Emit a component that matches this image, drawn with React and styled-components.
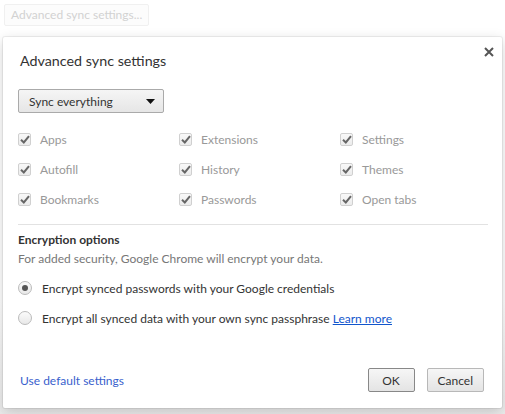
import React from 'react'
import styled, { createGlobalStyle } from 'styled-components'

const GlobalStyle = createGlobalStyle`
  html, body {
    margin: 0;
    padding: 0;
    background: #fff;
  }
  body {
    font-family: Lato, "Noto Sans", sans-serif;
    color: #333;
  }
`;

const Page = styled.div`
  width: 505px;
  height: 414px;
  overflow: hidden;
  display: flex;
  flex-direction: column;
  padding: 4px 3px 0 3px;
  box-sizing: border-box;
  background: linear-gradient(#fff 0, #fff 300px, #ececec 414px);
`;

const FadedButton = styled.div`
  align-self: flex-start;
  margin-left: 1px;
  height: 22px;
  padding: 0 6px;
  box-sizing: border-box;
  border: 1px solid #f0f0f0;
  border-radius: 2px;
  color: #d2d2d2;
  font-size: 12px;
  line-height: 20px;
  background: #fcfcfc;
`;

const Dialog = styled.div`
  margin-top: 11px;
  width: 499px;
  height: 371px;
  box-sizing: border-box;
  background: #fff;
  border-radius: 2px;
  box-shadow: 0 0 0 1px rgba(0, 0, 0, 0.06), 0 4px 14px rgba(0, 0, 0, 0.18);
  position: relative;
  display: flex;
  flex-direction: column;
  padding: 14px 15px 16px 15px;
  font-size: 12px;
`;

const Close = styled.button`
  position: absolute;
  top: 8px;
  right: 6px;
  width: 14px;
  height: 14px;
  padding: 0;
  border: none;
  background: none;
  display: flex;
  align-items: center;
  justify-content: center;
`;

const Title = styled.h1`
  margin: 0 0 0 2px;
  font-size: 14.3px;
  font-weight: 400;
  color: #333;
  line-height: 20px;
`;

const Select = styled.div`
  margin-top: 18px;
  width: 146px;
  height: 24px;
  box-sizing: border-box;
  border: 1px solid #aaa;
  border-radius: 2px;
  background: linear-gradient(#f5f5f5, #e6e6e6);
  display: flex;
  align-items: center;
  justify-content: space-between;
  padding: 0 8px 0 10px;
  color: #333;
`;

const Grid = styled.div`
  margin-top: 17px;
  display: grid;
  grid-template-columns: 161px 161px 1fr;
  row-gap: 12px;
`;

const CheckItem = styled.div`
  display: flex;
  align-items: center;
  height: 18px;
  gap: 9px;
  color: #999;
`;

const Box = styled.span`
  width: 13px;
  height: 13px;
  box-sizing: border-box;
  border: 1px solid #d0d0d0;
  border-radius: 2px;
  background: linear-gradient(#f8f8f8, #ececec);
  display: flex;
  align-items: center;
  justify-content: center;
`;

const Divider = styled.hr`
  margin: 16px 0 0 0;
  border: none;
  border-top: 1px solid #e2e2e2;
  width: 470px;
`;

const SectionTitle = styled.h2`
  margin: 6px 0 0 0;
  font-size: 12px;
  font-weight: 700;
  color: #333;
  line-height: 18px;
`;

const Note = styled.p`
  margin: 1px 0 0 0;
  color: #777;
  line-height: 18px;
`;

const RadioRow = styled.label`
  display: flex;
  align-items: center;
  gap: 10px;
  margin-top: ${p => p.$first ? '11px' : '12px'};
  height: 18px;
  color: #333;
`;

const Radio = styled.span`
  width: 14px;
  height: 14px;
  box-sizing: border-box;
  border-radius: 50%;
  border: 1px solid #bbb;
  background: linear-gradient(#fbfbfb, #e8e8e8);
  display: flex;
  align-items: center;
  justify-content: center;
  &::after {
    content: '';
    display: ${p => p.$checked ? 'block' : 'none'};
    width: 6px;
    height: 6px;
    border-radius: 50%;
    background: #555;
  }
`;

const Link = styled.a`
  color: #15c;
  text-decoration: underline;
  cursor: pointer;
`;

const Footer = styled.div`
  margin-top: auto;
  display: flex;
  align-items: center;
  justify-content: space-between;
`;

const DefaultLink = styled.a`
  margin-left: 2px;
  color: #3a5fcd;
  cursor: pointer;
`;

const Buttons = styled.div`
  display: flex;
  gap: 12px;
  margin-right: 3px;
`;

const Button = styled.button`
  height: 24px;
  min-width: ${p => p.$w}px;
  box-sizing: border-box;
  border: 1px solid ${p => p.$focus ? '#888' : '#b8b8b8'};
  border-radius: 2px;
  background: linear-gradient(#f6f6f6, #e4e4e4);
  font-family: inherit;
  font-size: 12px;
  color: #333;
  padding: 0 10px;
`;

const Check = () => (
  <svg width="10" height="9" viewBox="0 0 10 9">
    <path d="M1 4.8 L3.8 7.5 L9 1.2" fill="none" stroke="#666" strokeWidth="2" />
  </svg>
);

const items = ['Apps', 'Extensions', 'Settings', 'Autofill', 'History', 'Themes', 'Bookmarks', 'Passwords', 'Open tabs'];

export default function App() {
  return (
    <Page>
      <GlobalStyle />
      <FadedButton>Advanced sync settings...</FadedButton>
      <Dialog>
        <Close aria-label="Close">
          <svg width="10" height="10" viewBox="0 0 10 10">
            <path d="M1 1 L9 9 M9 1 L1 9" stroke="#555" strokeWidth="2" />
          </svg>
        </Close>
        <Title>Advanced sync settings</Title>
        <Select>
          <span>Sync everything</span>
          <svg width="9" height="5" viewBox="0 0 9 5">
            <path d="M0 0 H9 L4.5 5 Z" fill="#111" />
          </svg>
        </Select>
        <Grid>
          {items.map(name => (
            <CheckItem key={name}>
              <Box><Check /></Box>
              {name}
            </CheckItem>
          ))}
        </Grid>
        <Divider />
        <SectionTitle>Encryption options</SectionTitle>
        <Note>For added security, Google Chrome will encrypt your data.</Note>
        <RadioRow $first>
          <Radio $checked />
          Encrypt synced passwords with your Google credentials
        </RadioRow>
        <RadioRow>
          <Radio />
          <span>Encrypt all synced data with your own sync passphrase <Link>Learn more</Link></span>
        </RadioRow>
        <Footer>
          <DefaultLink>Use default settings</DefaultLink>
          <Buttons>
            <Button $w={47} $focus>OK</Button>
            <Button $w={56}>Cancel</Button>
          </Buttons>
        </Footer>
      </Dialog>
    </Page>
  )
}
